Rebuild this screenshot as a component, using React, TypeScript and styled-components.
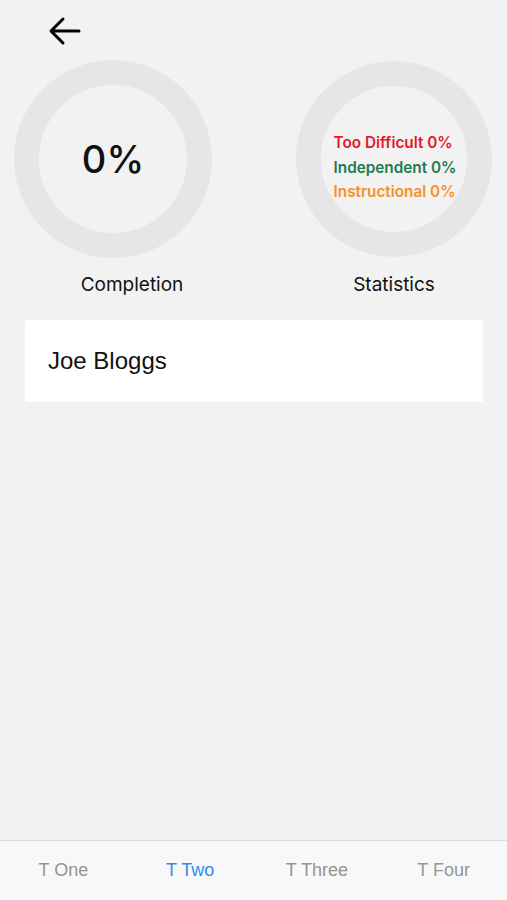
import React from "react";
import styled, { createGlobalStyle } from "styled-components";

//~~~~~~~~~~~~~~~~~~~Global
const GlobalStyle = createGlobalStyle`
  html, body {
    margin: 0;
    padding: 0;
    background: #f2f2f2;
  }
  * {
    box-sizing: border-box;
  }
`;

//~~~~~~~~~~~~~~~~~~~Styled Components
const Screen = styled.div`
  width: 507px;
  height: 900px;
  display: flex;
  flex-direction: column;
  background: #f2f2f2;
  font-family: "Liberation Sans", Arial, sans-serif;
  color: #111;
`;

const Main = styled.main`
  flex: 1;
  display: flex;
  flex-direction: column;
`;

const Header = styled.header`
  height: 60px;
  padding: 16px 0 0 48px;
`;

const BackButton = styled.button`
  width: 34px;
  height: 30px;
  padding: 0;
  border: none;
  background: none;
  color: #000;
  & > svg {
    display: block;
    width: 34px;
    height: 30px;
  }
`;

const Charts = styled.section`
  display: flex;
  justify-content: space-between;
  padding: 0 14px;
`;

const ChartColumn = styled.div<{ $labelShift: number }>`
  display: flex;
  flex-direction: column;
  align-items: center;
  width: 198px;

  & > h3 {
    margin: 15px 0 0 ${({ $labelShift }) => $labelShift}px;
    font-family: Inter, "Liberation Sans", sans-serif;
    font-weight: 400;
    font-size: 19px;
    line-height: 24px;
    color: #111;
  }
`;

const Ring = styled.div<{ $size: number }>`
  width: ${({ $size }) => $size}px;
  height: ${({ $size }) => $size}px;
  margin: ${({ $size }) => (198 - $size) / 2}px 0;
  border-radius: 50%;
  border: 25px solid #e6e6e6;
  display: flex;
  flex-direction: column;
  align-items: center;
  justify-content: center;
`;

const Percent = styled.span`
  font-family: Inter, "Liberation Sans", sans-serif;
  font-size: 38px;
  font-weight: 500;
  color: #111;
`;

const StatList = styled.ul`
  list-style: none;
  margin: 0;
  padding: 17px 0 0 2px;
  display: flex;
  flex-direction: column;
  gap: 5px;
`;

const StatLine = styled.li<{ $color: string }>`
  font-family: Inter, "Liberation Sans", sans-serif;
  font-weight: 600;
  font-size: 15.3px;
  line-height: 19.5px;
  color: ${({ $color }) => $color};
  white-space: nowrap;
`;

const StudentCard = styled.div`
  margin: 23px 24px 0 25px;
  height: 82px;
  background: #fff;
  border-radius: 2px;
  display: flex;
  align-items: center;
  padding: 0 0 0 23px;
  font-size: 24px;
  color: #111;
`;

const TabBar = styled.nav`
  height: 60px;
  display: grid;
  grid-template-columns: repeat(4, 1fr);
  background: #f8f8f8;
  border-top: 1px solid #dcdcdc;
`;

const Tab = styled.button<{ $active?: boolean }>`
  border: none;
  background: none;
  padding: 0;
  font-family: "Liberation Sans", Arial, sans-serif;
  font-size: 18px;
  color: ${({ $active }) => ($active ? "#2f8cf0" : "#959595")};
`;

//~~~~~~~~~~~~~~~~~~~Data
const stats = [
  { label: "Too Difficult", value: 0, color: "#e5172b" },
  { label: "Independent", value: 0, color: "#1e7a4e" },
  { label: "Instructional", value: 0, color: "#f39322" },
];

const tabs = ["T One", "T Two", "T Three", "T Four"];

//~~~~~~~~~~~~~~~~~~~Component
const App = (): JSX.Element => {
  return (
    <>
      <GlobalStyle />
      <Screen>
        <Main>
          <Header>
            <BackButton aria-label="Back">
              <svg viewBox="0 0 34 30" fill="none" stroke="currentColor" strokeWidth="3" strokeLinecap="round" strokeLinejoin="round">
                <path d="M31 15H4M15 3L3 15l12 12" />
              </svg>
            </BackButton>
          </Header>
          <Charts>
            <ChartColumn $labelShift={38}>
              <Ring $size={198}>
                <Percent>0%</Percent>
              </Ring>
              <h3>Completion</h3>
            </ChartColumn>
            <ChartColumn $labelShift={0}>
              <Ring $size={196}>
                <StatList>
                  {stats.map((s) => (
                    <StatLine key={s.label} $color={s.color}>
                      {s.label} {s.value}%
                    </StatLine>
                  ))}
                </StatList>
              </Ring>
              <h3>Statistics</h3>
            </ChartColumn>
          </Charts>
          <StudentCard>Joe Bloggs</StudentCard>
        </Main>
        <TabBar>
          {tabs.map((t, i) => (
            <Tab key={t} $active={i === 1}>
              {t}
            </Tab>
          ))}
        </TabBar>
      </Screen>
    </>
  );
};

export default App;
